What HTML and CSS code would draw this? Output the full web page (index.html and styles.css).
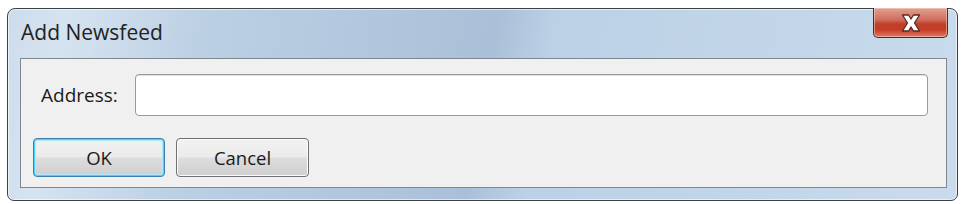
FILE: index.html
```html
<!DOCTYPE html>
<html lang="en">
<head>
    <meta charset="UTF-8">
    <title>Add Newsfeed</title>
    <link rel="stylesheet" href="styles.css">
</head>
<body>
    <div class="window">
        <!-- Title bar -->
        <div class="titlebar">
            <span class="title">Add Newsfeed</span>
            <div class="close-btn">
                <svg width="24" height="20" viewBox="0 0 24 20">
                    <path d="M3.5 2 L9.5 2 L12 6 L14.5 2 L20.5 2 L15.5 10 L20.5 18 L14.5 18 L12 14 L9.5 18 L3.5 18 L8.5 10 Z" fill="#fff" stroke="#5a2a24" stroke-width="1.3" stroke-linejoin="round"/>
                </svg>
            </div>
        </div>

        <!-- Dialog content -->
        <div class="content">
            <div class="field-row">
                <label class="field-label" for="address">Address:</label>
                <input class="field-input" id="address" type="text">
            </div>
            <div class="button-row">
                <button class="btn default">OK</button>
                <button class="btn">Cancel</button>
            </div>
        </div>
    </div>
</body>
</html>
```

FILE: styles.css
```css
* {
    margin: 0;
    padding: 0;
    box-sizing: border-box;
}

body {
    background-color: #fff;
    font-family: 'Open Sans', 'Noto Sans', sans-serif;
    color: #1a1a1a;
}

.window {
    margin: 8px 0 0 7px;
    width: 951px;
    height: 193px;
    border: 1px solid #3c4148;
    border-radius: 8px 8px 7px 7px;
    background: linear-gradient(100deg, #cddced 0%, #d6e3f0 6%, #bcd0e4 20%, #aac0d8 50%, #bcd1e6 56%, #c3d6e9 80%, #c9dbec 100%);
    box-shadow: inset 0 0 0 1px rgba(255, 255, 255, 0.6);
    display: flex;
    flex-direction: column;
}

.titlebar {
    height: 49px;
    display: flex;
    justify-content: space-between;
    align-items: flex-start;
}

.title {
    padding: 9px 0 0 13px;
    font-size: 21px;
    line-height: 28px;
    color: #222;
}

.close-btn {
    width: 75px;
    height: 30px;
    margin-right: 9px;
    margin-top: -1px;
    border: 1px solid #4e2a26;
    border-top: none;
    border-radius: 0 0 5px 5px;
    background: linear-gradient(to bottom, #e3a191 0%, #d06f5d 40%, #bf3f29 55%, #c63d26 75%, #dc7b66 100%);
    box-shadow: inset 0 0 0 1px rgba(255, 220, 210, 0.5);
    display: flex;
    justify-content: center;
    align-items: center;
}

.content {
    flex: 1;
    margin: 0 10px 12px 12px;
    border: 1px solid #7f8790;
    background-color: #f0f0f0;
    padding: 15px 18px 10px 12px;
    display: flex;
    flex-direction: column;
}

.field-row {
    display: flex;
    align-items: center;
    height: 42px;
}

.field-label {
    width: 102px;
    padding-left: 8px;
    font-size: 19px;
}

.field-input {
    flex: 1;
    height: 42px;
    border: 1px solid #9a9a9a;
    border-radius: 4px;
    background-color: #fff;
    box-shadow: inset 0 1px 0 #e0e0e0;
}

.button-row {
    display: flex;
    gap: 11px;
    margin-top: 22px;
}

.btn {
    width: 133px;
    height: 39px;
    border: 1px solid #707070;
    border-radius: 4px;
    background: linear-gradient(to bottom, #f2f2f2 0%, #ebebeb 48%, #dddddd 52%, #cfcfcf 100%);
    box-shadow: inset 0 0 0 1px #fbfbfb;
    font-family: 'Open Sans', 'Noto Sans', sans-serif;
    font-size: 18.5px;
    color: #1a1a1a;
}

.btn.default {
    width: 132px;
    border-color: #3c7fb1;
    box-shadow: inset 0 0 0 1px #48d6ff, inset 0 0 0 2px #b3e6f7;
}
```
